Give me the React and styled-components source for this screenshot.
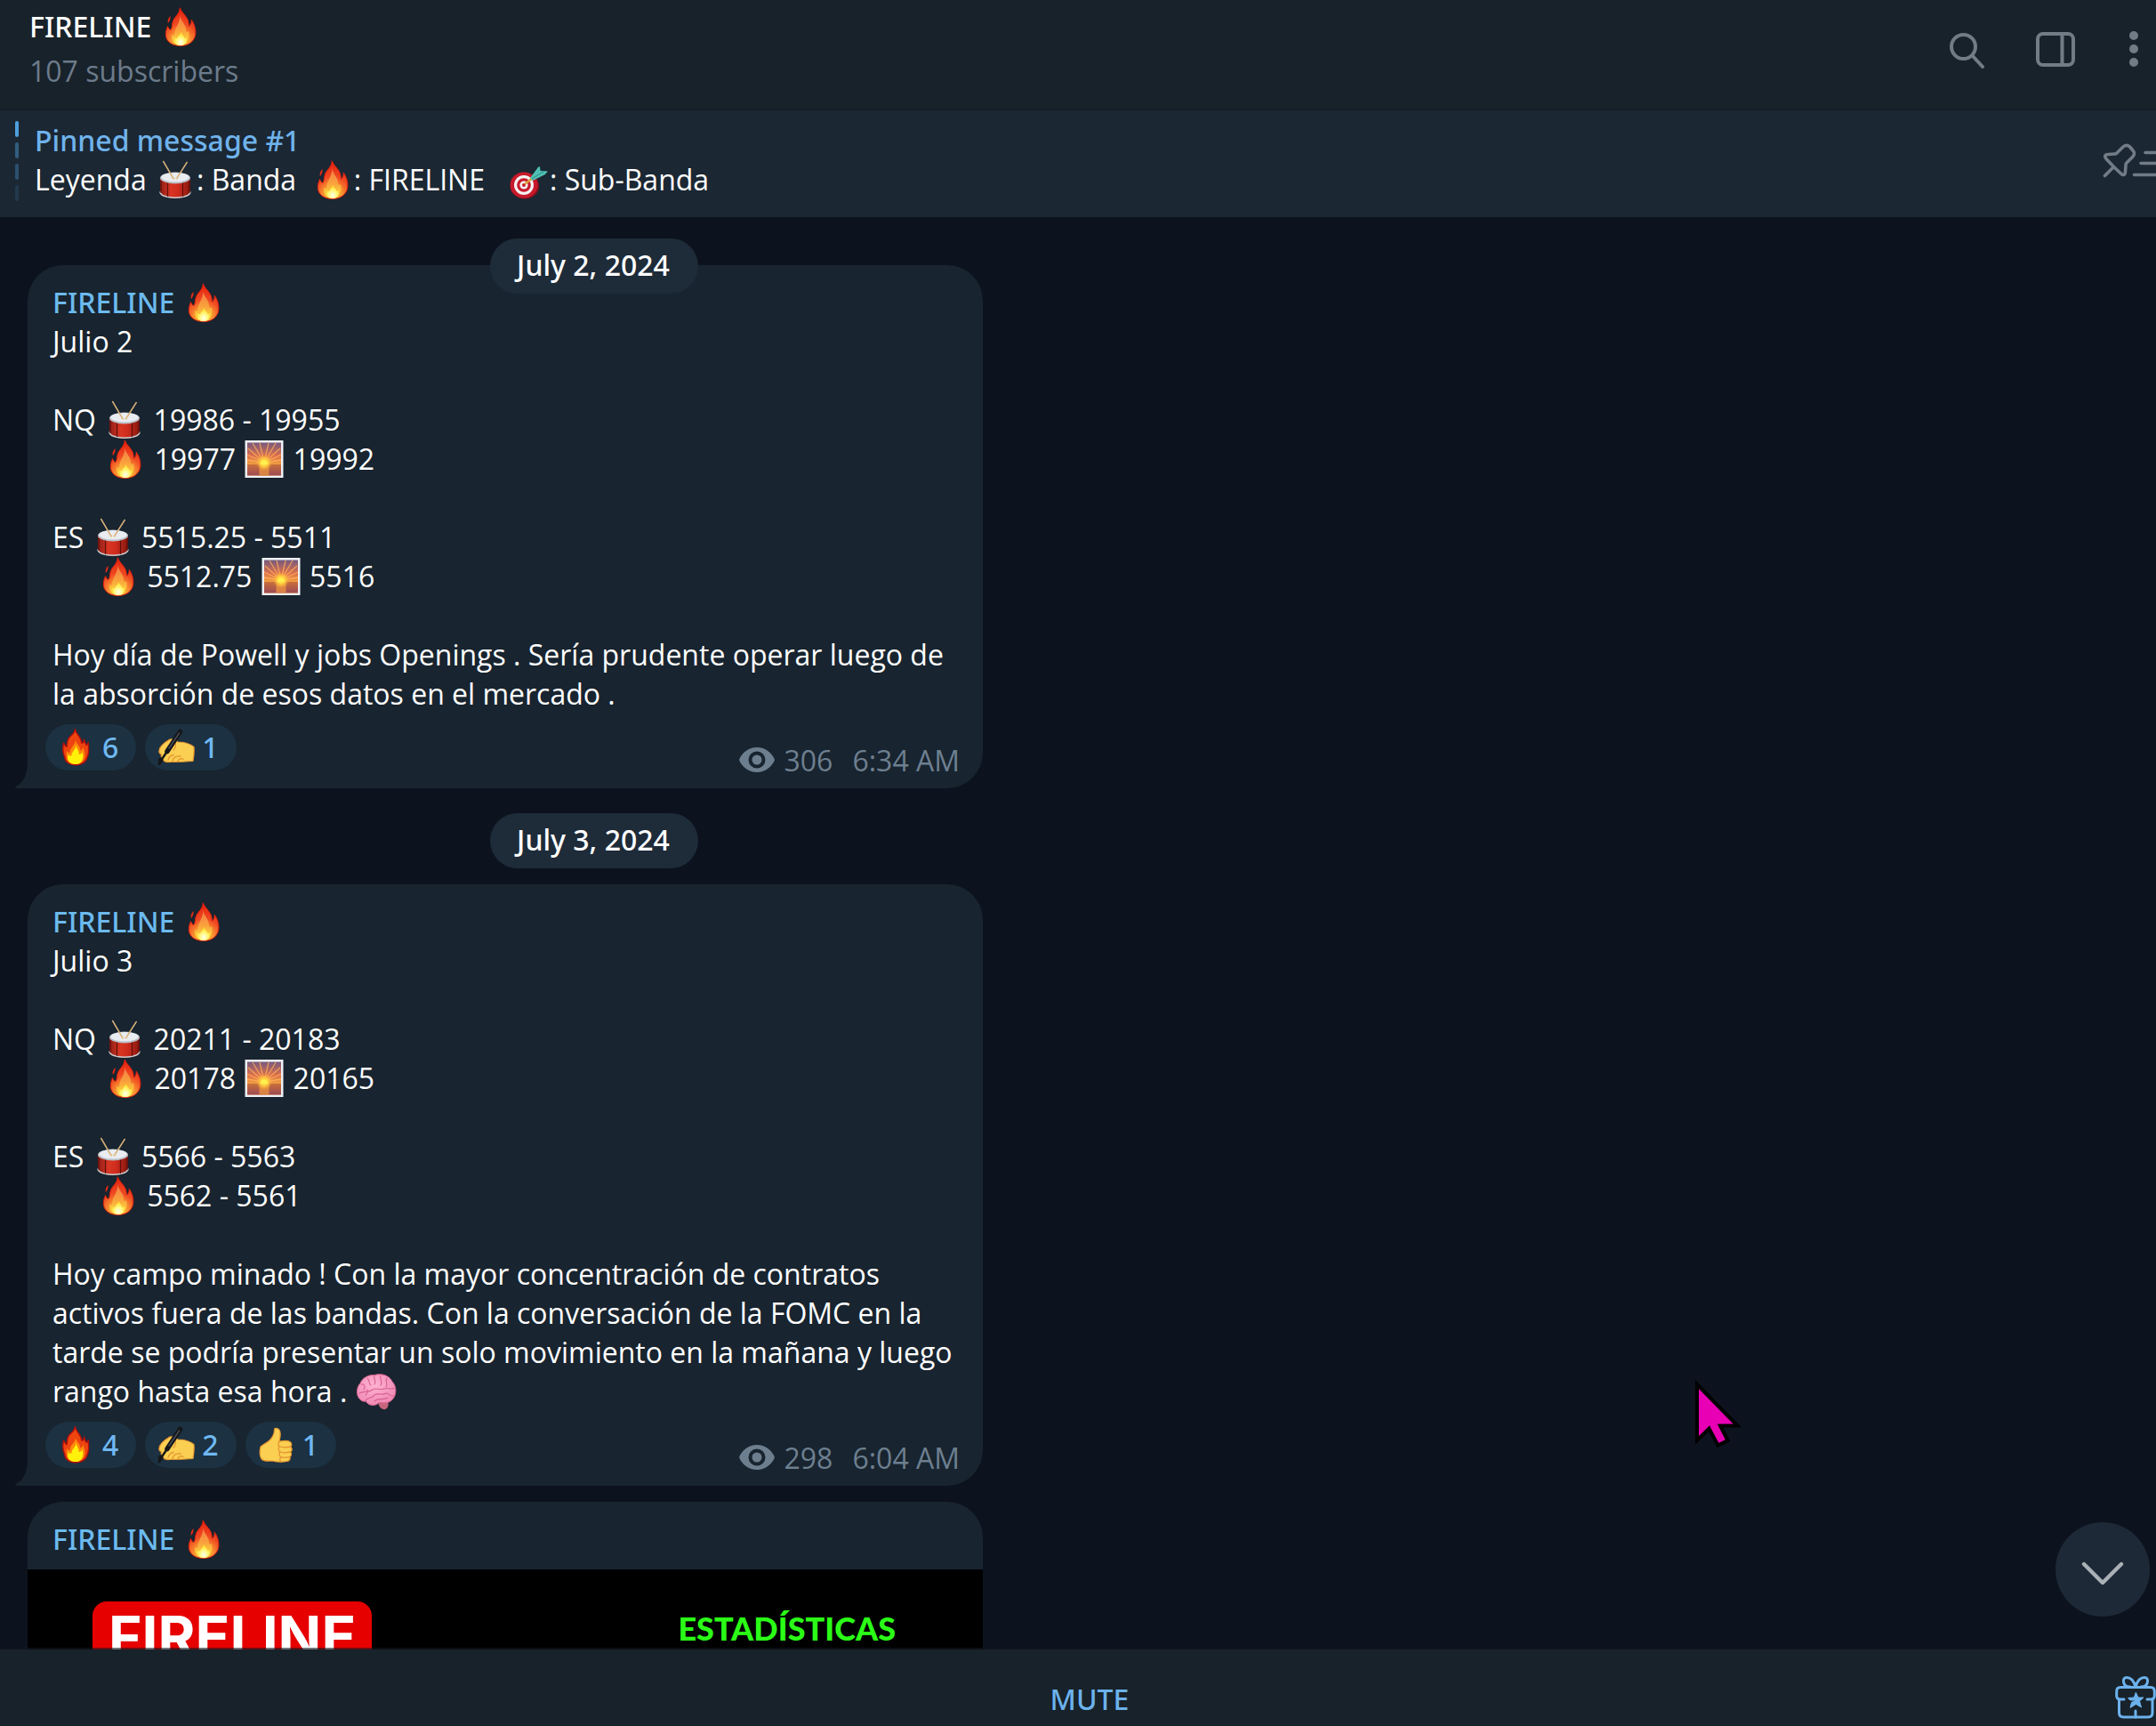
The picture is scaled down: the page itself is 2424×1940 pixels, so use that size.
import React from "react";
import styled, { createGlobalStyle, css } from "styled-components";

const GlobalStyle = createGlobalStyle`
  *, *::before, *::after { box-sizing: border-box; }
  body {
    margin: 0;
    background: #0c131e;
    color: #fff;
    font: 400 32px/44px "Open Sans", sans-serif;
  }
  button {
    margin: 0;
    padding: 0;
    border: 0;
    background: none;
    color: inherit;
    font: inherit;
    cursor: pointer;
  }
`;

const medium = css`
  font-family: "Noto Sans", "Open Sans", sans-serif;
  font-weight: 500;
`;

/* ---------- layout ---------- */

const Window = styled.div`
  position: relative;
  display: flex;
  flex-direction: column;
  height: 100vh;
  overflow: hidden;
`;

const Header = styled.header`
  display: flex;
  justify-content: space-between;
  flex: none;
  padding: 8px 17px 20px 33px;
  background: #18222a;
  border-bottom: 2px solid #151e26;
`;

const Heading = styled.div`
  display: flex;
  flex-direction: column;
  gap: 6px;
`;

const Title = styled.h1`
  ${medium}
  margin: 0;
  font-size: 32px;
  line-height: 44px;
`;

const Subscribers = styled.span`
  color: #6c7b8b;
`;

const Actions = styled.div`
  display: flex;
  align-items: center;
  gap: 58px;
  color: #727c86;
`;

const IconButton = styled.button`
  display: flex;
`;

const Pinned = styled.section`
  display: flex;
  gap: 18px;
  flex: none;
  padding: 12px 0 18px 17px;
  background: #1b2733;
`;

const PinTicks = styled.div`
  display: flex;
  flex-direction: column;
  gap: 6px;
`;

const PinTick = styled.span`
  width: 4px;
  height: 18px;
  border-radius: 2px;
  background: #4f9fdc;
  opacity: ${(p) => p.$strength};
`;

const PinnedBody = styled.div`
  flex: 1;
  white-space: pre;
`;

const PinnedTitle = styled.div`
  ${medium}
  color: #6fb3ec;
`;

const PinnedButton = styled(IconButton)`
  align-items: center;
  color: #727c86;
`;

const Chat = styled.main`
  position: relative;
  flex: 1;
  min-height: 0;
  overflow: hidden;
`;

const Column = styled.div`
  display: flex;
  flex-direction: column;
  align-items: flex-start;
  gap: 18px;
  max-width: 1336px;
  padding: 54px 0 0 31px;
`;

const DatePill = styled.time`
  ${medium}
  padding: 8px 32px 10px 30px;
  border-radius: 31px;
  background: #1e2b39;
`;

const StickyDate = styled.div`
  position: absolute;
  top: 24px;
  left: 0;
  display: flex;
  justify-content: center;
  width: 100%;
  max-width: 1336px;
  z-index: 1;
`;

const DateRow = styled.div`
  display: flex;
  justify-content: center;
  align-self: stretch;
  margin-left: -31px;
  padding-top: 10px;
`;

const Bubble = styled.article`
  position: relative;
  width: 100%;
  max-width: 1074px;
  padding: 20px 26px 7px 28px;
  border-radius: 40px 40px 40px 0;
  background: #18242f;
`;

const PhotoBubble = styled(Bubble)`
  padding: 20px 0 0;
  border-radius: 40px 40px 0 0;
`;

const Tail = styled.svg`
  position: absolute;
  left: -14px;
  bottom: 0;
  fill: #18242f;
`;

const Author = styled.div`
  ${medium}
  color: #6cbaee;
`;

const PhotoAuthor = styled(Author)`
  padding: 0 28px 12px;
`;

const Text = styled.div`
  margin-right: -6px;
  white-space: pre-wrap;
`;

const BubbleFooter = styled.div`
  display: flex;
  justify-content: space-between;
  align-items: flex-end;
  padding-top: 12px;
  margin-left: -8px;
`;

const Reactions = styled.div`
  display: flex;
  gap: 10px;
  padding-bottom: 13px;
`;

const Reaction = styled.button`
  ${medium}
  display: flex;
  align-items: center;
  gap: 8px;
  height: 52px;
  padding: 0 20px 0 12px;
  border-radius: 26px;
  background: #1c3141;
  color: #6fb8f2;
`;

const Meta = styled.div`
  display: flex;
  gap: 10px;
  padding-bottom: 2px;
  color: #6d7f8f;
`;

const MetaTime = styled.time`
  padding-left: 12px;
`;

const EyeIcon = styled.svg`
  margin-top: 7px;
`;

const EmojiSvg = styled.svg`
  width: 48px;
  height: 44px;
  vertical-align: top;
`;

const Photo = styled.figure`
  display: flex;
  justify-content: space-between;
  height: 604px;
  margin: 0;
  padding: 36px 98px 0 73px;
  background: #000;
  font-family: Inter, sans-serif;
  font-weight: 700;
`;

const Logo = styled.div`
  align-self: flex-start;
  padding: 4px 18px 20px;
  border-radius: 16px;
  background: #e60000;
  font-size: 64px;
  line-height: 72px;
`;

const Caption = styled.figcaption`
  padding-top: 10px;
  text-align: right;
  color: #2bff17;
  font-family: Lato, sans-serif;
  font-weight: 900;
  font-size: 36px;
  line-height: 40px;
`;

const CaptionDate = styled.div`
  color: #fff;
  font-size: 64px;
  line-height: 56px;
`;

const ScrollDown = styled.button`
  position: absolute;
  right: 7px;
  bottom: 37px;
  display: flex;
  align-items: center;
  justify-content: center;
  width: 106px;
  height: 106px;
  border-radius: 50%;
  background: #1d2936;
`;

const Footer = styled.footer`
  position: relative;
  display: flex;
  align-items: flex-start;
  flex: none;
  padding: 30px 0 8px 72px;
  background: #18222a;
  box-shadow: 0 -2px 0 rgba(16, 24, 32, 0.6);
`;

const Mute = styled.button`
  ${medium}
  flex: 1;
  padding-top: 4px;
  color: #6cb2ec;
`;

const Pointer = styled.svg`
  position: absolute;
  right: 464px;
  bottom: 311px;
`;

/* ---------- emoji ---------- */

const EmojiDefs = () => (
  <svg width="0" height="0" style={{ position: "absolute" }} aria-hidden="true">
    <defs>
      <radialGradient id="fireBody" gradientUnits="userSpaceOnUse" cx="22" cy="39" r="37">
        <stop offset="0" stopColor="#ffd84a" />
        <stop offset=".3" stopColor="#f98f30" />
        <stop offset=".55" stopColor="#ef4a22" />
        <stop offset="1" stopColor="#e4200f" />
      </radialGradient>
      <linearGradient id="fireMid" x1="0" y1="0" x2="0" y2="1">
        <stop offset="0" stopColor="#f47a48" />
        <stop offset=".5" stopColor="#f9a13c" />
        <stop offset="1" stopColor="#ffe63c" />
      </linearGradient>
      <radialGradient id="fireCore" cx=".5" cy=".75" r=".6">
        <stop offset="0" stopColor="#fffff0" />
        <stop offset=".4" stopColor="#fffb9a" />
        <stop offset="1" stopColor="#ffe531" />
      </radialGradient>
      <linearGradient id="drumBody" x1="0" x2="1">
        <stop offset="0" stopColor="#8c1d16" />
        <stop offset=".35" stopColor="#d93523" />
        <stop offset=".6" stopColor="#cf2c1d" />
        <stop offset="1" stopColor="#84170f" />
      </linearGradient>
      <linearGradient id="sky" x1="0" y1="0" x2="0" y2="1">
        <stop offset="0" stopColor="#75597f" />
        <stop offset=".4" stopColor="#dd6f4c" />
        <stop offset=".8" stopColor="#fbb73a" />
      </linearGradient>
      <linearGradient id="sea" x1="0" y1="0" x2="0" y2="1">
        <stop offset="0" stopColor="#c9703b" />
        <stop offset="1" stopColor="#9c4a55" />
      </linearGradient>
      <radialGradient id="sunGlow">
        <stop offset="0" stopColor="#fff36b" />
        <stop offset=".45" stopColor="#ffd23c" />
        <stop offset="1" stopColor="#ffb13c" stopOpacity="0" />
      </radialGradient>
      <radialGradient id="brainFill" cx=".45" cy=".35" r=".7">
        <stop offset="0" stopColor="#ffb3d2" />
        <stop offset="1" stopColor="#ee86b2" />
      </radialGradient>
    </defs>
  </svg>
);

const Fire = () => (
  <EmojiSvg viewBox="-2 0 48 44" role="img" aria-label="fire">
    <path fill="#e32a14" d="M10.500 10C8.500 12 7 14.500 7.800 18 9.800 16 10.800 13.500 10.500 10Z" />
    <path
      fill="url(#fireBody)"
      stroke="#dc200f"
      strokeWidth="1"
      d="M21.300 .8C22.500 5 26.500 8 29.300 12.500 31 15.500 31.200 18.500 31.500 21.500 33.500 19.500 34.500 17 34.200 14 37.500 19 39.600 25 38.700 31 37.500 38.500 31 43.500 22 43.500 12 43.500 5.600 38.500 5.300 31 5.200 27 6.500 24 7.500 21.500 8.300 23.500 9.500 25.500 11 25.500 13 23 11.800 19 14 14.500 16.500 10 21 7 21.300 .8Z"
    />
    <path
      fill="url(#fireMid)"
      d="M21.500 9C21.500 15 27.500 18 28 25 28.200 28 29.500 29 31 27 33 33 30 42.500 22 43 14 42.500 11 37 12.500 30 13 32 14 32.500 15.200 31 15 23 21 20 21.500 9Z"
    />
    <path
      fill="url(#fireCore)"
      d="M22.500 28C23 31 26 32 26.500 35 27.500 35 28 34.500 28.500 33.500 30 38.500 27.500 43 22 43.300 16.500 43 14.500 39 15.500 34 16.500 35.500 17.500 35.500 18.500 34.500 19 32 22 31 22.500 28Z"
    />
  </EmojiSvg>
);

const Drum = () => (
  <EmojiSvg viewBox="-2 0 48 44" role="img" aria-label="drum">
    <path fill="url(#drumBody)" d="M5 20V36C5 45 39 45 39 36V20Z" />
    <path fill="none" stroke="#c9ccd0" strokeWidth="1.600" d="M5 35.500C5 44.500 39 44.500 39 35.500" />
    <path stroke="#5d100b" strokeWidth="1.200" d="M13.500 25V41M30.500 25V41M6 23V37M38 23V37" />
    <ellipse cx="22" cy="20" rx="17" ry="6.500" fill="#b9bec6" />
    <ellipse cx="22" cy="19.200" rx="15.600" ry="5.200" fill="#e9edf2" />
    <path stroke="#d6b07a" strokeWidth="1.500" strokeLinecap="round" d="M8.700 1.500 19.500 20M35.200 2.500 24 20" />
    <circle cx="20" cy="20.500" r="1.300" fill="#e6c491" />
    <circle cx="23.800" cy="20.500" r="1.300" fill="#e6c491" />
  </EmojiSvg>
);

const Sunrise = () => (
  <EmojiSvg viewBox="-2 0 48 44" role="img" aria-label="sunrise">
    <rect x=".5" y="1" width="43" height="42" fill="#eef1f6" />
    <rect x="3" y="3.500" width="38" height="37" fill="url(#sky)" />
    <g stroke="#ffb45a" strokeWidth="1.300" opacity=".75">
      <path d="M22 26 3 23M22 26 3 17M22 26 4 10M22 26 9 4M22 26 17 4M22 26 27 4M22 26 35 4M22 26 40 10M22 26 41 17M22 26 41 23" />
    </g>
    <rect x="3" y="28" width="38" height="12.500" fill="url(#sea)" />
    <rect x="16.500" y="28" width="11" height="12.500" fill="#ec9440" opacity=".75" />
    <circle cx="22" cy="26" r="9" fill="url(#sunGlow)" />
    <path fill="#fff04f" d="M17.500 28A4.500 4.500 0 0 1 26.500 28Z" />
  </EmojiSvg>
);

const Dart = () => (
  <EmojiSvg viewBox="0 0 48 44" role="img" aria-label="target">
    <ellipse cx="20" cy="29" rx="16" ry="14.500" fill="#8f0f1c" />
    <ellipse cx="19" cy="28" rx="15.500" ry="14.500" fill="#c8192b" />
    <circle cx="19" cy="28" r="11" fill="#f4f1f1" />
    <circle cx="19" cy="28" r="7.800" fill="#c8192b" />
    <circle cx="19" cy="28" r="4.600" fill="#f4f1f1" />
    <circle cx="19" cy="28" r="2" fill="#c8192b" />
    <path stroke="#d9a441" strokeWidth="2.400" d="M20 27 30 19" />
    <path fill="#4fc0b4" d="M26 20 35 8 37 7 37.500 12 46 12.500 43 16 29 23Z" />
    <path stroke="#2c8d85" strokeWidth="1" d="M28 21 41 13" />
  </EmojiSvg>
);

const Brain = () => (
  <EmojiSvg viewBox="-2 0 48 44" role="img" aria-label="brain">
    <path fill="#c9657f" d="M24 32C28 33 31 33 35 33 37 38 34 43 30 42 26 41 24 37 24 32Z" />
    <path
      fill="url(#brainFill)"
      stroke="#d4628f"
      d="M4 31C-1 27-.5 17 4 13 6 7 13 3 20 3.500 28 1 37 4 40 11 45 16 45 25 41 30 37 36 30 35 25 34.500 20 40 12 37 10.500 33 8 33.500 5.500 33 4 31Z"
    />
    <path
      fill="none"
      stroke="#d8608e"
      strokeWidth="1.100"
      strokeLinecap="round"
      d="M5 14C9 13 10 17 8 20M12 7C15 9 13 13 16 15M20 4C18 8 23 10 20 14M27 4C25 8 30 11 27 15M34 7C31 10 36 13 33 17M3 24C8 21 13 24 18 20 22 17 26 21 31 19 36 17 39 21 42 18M10 32C13 28 18 30 20 26 24 23 29 27 33 24 37 24 38 28 41 27M20 33C23 29 30 32 35 29M12 20C13 22 12 24 10 26"
    />
  </EmojiSvg>
);

const FlatFire = () => (
  <svg width="44" height="44" viewBox="0 0 44 44" role="img" aria-label="fire">
    <path
      fill="#ee4410"
      stroke="#b3100c"
      strokeWidth="1.400"
      strokeLinejoin="round"
      d="M21.500 1.500C22.500 8 28.500 10 29 17.500 31 17 31.500 15 31.500 13 33 17 32.500 18.500 34.500 19.500 36 18.500 36 17.500 36.200 16.500 37 24 37.500 28 35.500 32 34 38 30 41.500 22 41.800 14 41.500 10 38 9.500 32 7 27 7.500 22 8.500 17 10 19 10.500 21 12 21.500 13 18 12 15 14.500 11.500 17 8 21 7 21.500 1.500Z"
    />
    <path fill="#ff8a0c" d="M22 14C23 19 27.500 20 27 25.500 29 25 30 23.500 30.500 22 32 27 33.500 30 31.500 35 30 39 26 41 22 41 16 41 12.500 38 12 33 11.500 30 11.500 28 12.500 26 13.500 28 14.500 28.500 15.500 28 15.500 22 21.500 20 22 14Z" />
    <path fill="#fff10a" d="M22.500 19.500C23 24 26 25.500 25.800 30 28 30 29 28 29.500 27.500 31.500 33 30 41 22 41 14 41 11.500 35 14 30 15 32 16.500 32 17.500 31 18 26 22.500 24.500 22.500 19.500Z" />
  </svg>
);

const WritingHand = () => (
  <svg width="44" height="44" viewBox="0 0 44 44" role="img" aria-label="writing hand">
    <path
      fill="#fbcf52"
      stroke="#e2942f"
      strokeWidth="1.200"
      strokeLinejoin="round"
      d="M4 26C4 22 9 17 16 13 20 12 23 14 25 16 32 16 39 18 43 21.500 43.500 27 43 32 42 37.500 36 38 24 38.500 16 38.500 12 39 9 38 8 35 6 33 6 31 6.500 30 4 29 3.500 28 4 26Z"
    />
    <path fill="none" stroke="#e2942f" strokeWidth="1.300" strokeLinecap="round" d="M14 36C15 33 17 31 20 30.500M19 37.500C20 33 24 31.500 28 32M25 37.500C26 34.500 29 34 31 35.500M22 17C23 20 22 23 20 25" />
    <path stroke="#15171b" strokeWidth="5.500" strokeLinecap="round" d="M27.500 4.500 13 26.500" />
    <path fill="#15171b" d="M3.500 34 7.500 33.500 8.500 36.500 5.500 41.500 2.500 42.500Z" />
    <path stroke="#15171b" strokeWidth="2.400" d="M14 25 6.500 36" />
    <path stroke="#4a4d55" strokeWidth="1.400" strokeLinecap="round" d="M26.500 6 15 23" />
  </svg>
);

const ThumbsUp = () => (
  <svg width="44" height="44" viewBox="0 0 44 44" role="img" aria-label="thumbs up">
    <path
      fill="#fbcf52"
      stroke="#e2942f"
      strokeWidth="1.200"
      strokeLinejoin="round"
      d="M5 24C8 21 12 20 15 17 19 13 20.500 9 20.500 5 20.500 2.500 25 2.500 26.500 6 28 10 27 14 26 18 30 17.500 35 17 37 18 40 19 40.500 22 38.800 24 40.500 26 40.500 28.500 38.800 30 40 32 39.500 34.500 38 35.500 38.500 38 37 40 35 40.500 30 41.500 24 41.500 18 40 14 40 9 41 6 38 3.500 34 4 28 5 24Z"
    />
    <path fill="none" stroke="#e2942f" strokeWidth="1.300" strokeLinecap="round" d="M38.500 24C34 25 29 25 26 23.500 24 22 25 19 26.500 18M38.500 30C34 31 29 31 26.500 29.500 24.500 28 25 25 26 24M37.500 35.500C34 36.500 30 36.500 27.500 35.500 25.500 34 25.500 31 27 30M28 41C26 39.500 26.500 37 28 36" />
  </svg>
);

const EMOJI = {
  "🔥": Fire,
  "🥁": Drum,
  "🌅": Sunrise,
  "🎯": Dart,
  "🧠": Brain,
};

const REACTION_EMOJI = {
  "🔥": FlatFire,
  "✍️": WritingHand,
  "👍": ThumbsUp,
};

const Rich = ({ children }) =>
  children.split(/(🔥|🥁|🌅|🎯|🧠)/u).map((part, i) => {
    const Icon = EMOJI[part];
    return Icon ? <Icon key={i} /> : part;
  });

/* ---------- message parts ---------- */

const BubbleTail = () => (
  <Tail width="14" height="28" viewBox="0 0 14 28" aria-hidden="true">
    <path d="M14 0C14 12 9 22 1 26 -.5 27 0 28 2 28H14Z" />
  </Tail>
);

const Message = ({ text, reactions, views, time }) => (
  <Bubble>
    <BubbleTail />
    <Author>
      <Rich>FIRELINE 🔥</Rich>
    </Author>
    <Text>
      <Rich>{text}</Rich>
    </Text>
    <BubbleFooter>
      <Reactions>
        {reactions.map(([emoji, count]) => {
          const Icon = REACTION_EMOJI[emoji];
          return (
            <Reaction key={emoji} type="button">
              <Icon />
              {count}
            </Reaction>
          );
        })}
      </Reactions>
      <Meta>
        <EyeIcon width="40" height="28" viewBox="0 0 40 28" aria-label="views">
          <path
            fill="currentColor"
            fillRule="evenodd"
            d="M20 0C29 0 37 6 40 14 37 22 29 28 20 28S3 22 0 14C3 6 11 0 20 0ZM20 4.500A9.500 9.500 0 1 0 20 23.500 9.500 9.500 0 1 0 20 4.500ZM20 8.500A5.500 5.500 0 1 1 20 19.500 5.500 5.500 0 1 1 20 8.500Z"
          />
        </EyeIcon>
        <span>{views}</span>
        <MetaTime>{time}</MetaTime>
      </Meta>
    </BubbleFooter>
  </Bubble>
);

const JULY_2 = `Julio 2

NQ 🥁 19986 - 19955
       🔥 19977 🌅 19992

ES 🥁 5515.25 - 5511
      🔥 5512.75 🌅 5516

Hoy día de Powell y jobs Openings . Sería prudente operar luego de la absorción de esos datos en el mercado .`;

const JULY_3 = `Julio 3

NQ 🥁 20211 - 20183
       🔥 20178 🌅 20165

ES 🥁 5566 - 5563
      🔥 5562 - 5561

Hoy campo minado ! Con la mayor concentración de contratos activos fuera de las bandas. Con la conversación de la FOMC en la tarde se podría presentar un solo movimiento en la mañana y luego rango hasta esa hora . 🧠`;

export default function App() {
  return (
    <Window>
      <GlobalStyle />
      <EmojiDefs />

      <Header>
        <Heading>
          <Title>
            <Rich>FIRELINE 🔥</Rich>
          </Title>
          <Subscribers>107 subscribers</Subscribers>
        </Heading>
        <Actions>
          <IconButton type="button" aria-label="Search">
            <svg width="40" height="44" viewBox="0 0 40 44" fill="none" stroke="currentColor" strokeWidth="4" strokeLinecap="round">
              <circle cx="16.500" cy="19.500" r="13.500" />
              <path d="M26.500 29.500 38 42" />
            </svg>
          </IconButton>
          <IconButton type="button" aria-label="Toggle side panel">
            <svg width="44" height="40" viewBox="0 0 44 40" fill="none" stroke="currentColor" strokeWidth="4">
              <rect x="2" y="3" width="40" height="35" rx="6" />
              <path d="M29.500 4V37" />
            </svg>
          </IconButton>
          <IconButton type="button" aria-label="More">
            <svg width="16" height="40" viewBox="0 0 16 40" fill="currentColor">
              <circle cx="8" cy="5" r="5" />
              <circle cx="8" cy="20" r="5" />
              <circle cx="8" cy="35" r="5" />
            </svg>
          </IconButton>
        </Actions>
      </Header>

      <Pinned>
        <PinTicks>
          {[1, 0.45, 0.35, 0.15].map((strength, i) => (
            <PinTick key={i} $strength={strength} />
          ))}
        </PinTicks>
        <PinnedBody>
          <PinnedTitle>Pinned message #1</PinnedTitle>
          <Rich>{"Leyenda 🥁: Banda  🔥: FIRELINE   🎯: Sub-Banda"}</Rich>
        </PinnedBody>
        <PinnedButton type="button" aria-label="Pinned messages">
          <svg width="60" height="40" viewBox="0 0 60 40" fill="none" stroke="currentColor" strokeWidth="3.600" strokeLinecap="round" strokeLinejoin="round">
            <path d="M2.500 36.500 12.500 26.500M12.500 26.500 4 17.500C1.500 14.500 3 12.500 6 12.500L14 12C15 12 15.500 11.500 16 11L22.500 4.500C25 2 28 2 30.500 4L33.500 7.500C36 10 36 13 34 15L27 22C26.500 22.500 26 23.500 26 24.500L25.500 32C25.500 35.500 23.500 36.500 21 34.500Z" />
            <path d="M48 10.500H64M43 22.500H64M35.500 35.500H64" />
          </svg>
        </PinnedButton>
      </Pinned>

      <Chat>
        <StickyDate>
          <DatePill>July 2, 2024</DatePill>
        </StickyDate>
        <Column>
          <Message
            text={JULY_2}
            reactions={[["🔥", 6], ["✍️", 1]]}
            views={306}
            time="6:34 AM"
          />
          <DateRow>
            <DatePill>July 3, 2024</DatePill>
          </DateRow>
          <Message
            text={JULY_3}
            reactions={[["🔥", 4], ["✍️", 2], ["👍", 1]]}
            views={298}
            time="6:04 AM"
          />
          <PhotoBubble>
            <PhotoAuthor>
              <Rich>FIRELINE 🔥</Rich>
            </PhotoAuthor>
            <Photo>
              <Logo>FIRELINE</Logo>
              <Caption>
                ESTADÍSTICAS
                <CaptionDate>JUNIO 2024</CaptionDate>
              </Caption>
            </Photo>
          </PhotoBubble>
        </Column>
        <ScrollDown type="button" aria-label="Scroll to bottom">
          <svg width="48" height="34" viewBox="0 0 48 34" fill="none" stroke="#a9b0b6" strokeWidth="4.400" strokeLinecap="round" strokeLinejoin="round">
            <path d="M3 11 24 32 45 11" />
          </svg>
        </ScrollDown>
      </Chat>

      <Footer>
        <Mute type="button">MUTE</Mute>
        <IconButton type="button" aria-label="Send a gift">
          <svg width="46" height="48" viewBox="0 0 46 48" fill="none" stroke="#6cb2ec" strokeWidth="3" strokeLinecap="round" strokeLinejoin="round">
            <path d="M10 26H6C3 26 1.700 24.500 1.700 22V17C1.700 14 3 12.500 6 12.500H40C43 12.500 44.300 14 44.300 17V22C44.300 24.500 43 26 40 26H36" />
            <path d="M4.500 26V41C4.500 44.500 6 46 9.500 46H37C40.500 46 42 44.500 42 41V26" />
            <path d="M23 46V39" />
            <path d="M23 12C21 5 17 1.500 13 1.500 10 1.500 9 4 9.500 6.500 10 10 13 12 17 12M23 12C25 5 29 1.500 33 1.500 36 1.500 37 4 36.500 6.500 36 10 33 12 29 12" />
            <path fill="#6cb2ec" strokeWidth="1" d="M23.500 18.500 26 24H32L27.500 28 29.500 35 23.500 31.500 17 35.500 18.500 29.500 24 27 17 27 14.500 24.500 21 24Z" />
          </svg>
        </IconButton>
      </Footer>

      <Pointer width="54" height="78" viewBox="0 0 54 78" aria-hidden="true">
        <path
          fill="#e800b4"
          stroke="#000"
          strokeWidth="4"
          d="M2 5V68L15.500 54.500 25.500 73.500 36.500 68 28 51.500H47.500Z"
        />
      </Pointer>
    </Window>
  );
}
